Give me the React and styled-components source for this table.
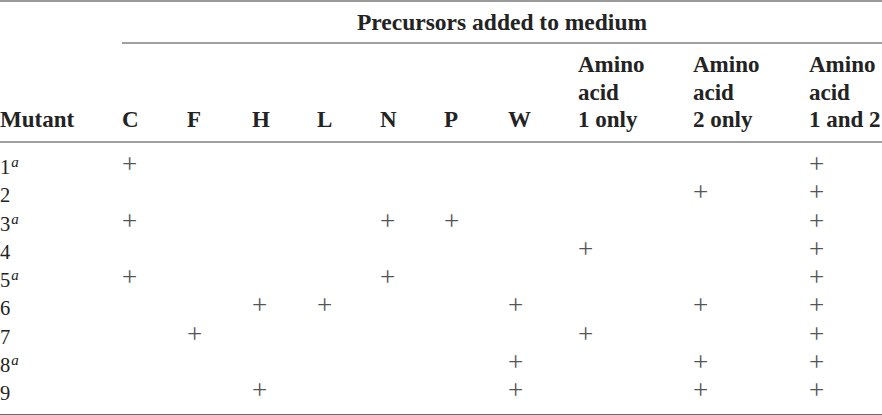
import React from 'react';
import styled, { createGlobalStyle } from 'styled-components';

const COLUMNS = [
    { key: 'mutant', label: ['Mutant'], width: 122 },
    { key: 'C', label: ['C'], width: 65 },
    { key: 'F', label: ['F'], width: 65 },
    { key: 'H', label: ['H'], width: 65 },
    { key: 'L', label: ['L'], width: 63 },
    { key: 'N', label: ['N'], width: 64 },
    { key: 'P', label: ['P'], width: 64 },
    { key: 'W', label: ['W'], width: 70 },
    { key: 'aa1', label: ['Amino', 'acid', '1 only'], width: 115 },
    { key: 'aa2', label: ['Amino', 'acid', '2 only'], width: 116 },
    { key: 'aa12', label: ['Amino', 'acid', '1 and 2'], width: 73 },
];

const MUTANTS = [
    { id: '1', note: true, plus: ['C', 'aa12'] },
    { id: '2', plus: ['aa2', 'aa12'] },
    { id: '3', note: true, plus: ['C', 'N', 'P', 'aa12'] },
    { id: '4', plus: ['aa1', 'aa12'] },
    { id: '5', note: true, plus: ['C', 'N', 'aa12'] },
    { id: '6', plus: ['H', 'L', 'W', 'aa2', 'aa12'] },
    { id: '7', plus: ['F', 'aa1', 'aa12'] },
    { id: '8', note: true, plus: ['W', 'aa2', 'aa12'] },
    { id: '9', plus: ['H', 'W', 'aa2', 'aa12'] },
];

const GlobalStyle = createGlobalStyle`
    html, body {
        margin: 0;
        padding: 0;
        background: #ffffff;
    }
    body {
        font-family: "Liberation Serif", "Times New Roman", serif;
        color: #232323;
    }
`;

const Table = styled.table`
    width: 882px;
    table-layout: fixed;
    border-collapse: collapse;
    border-top: 2px solid #9a9a9a;
    border-bottom: 2px solid #6a6a6a;
`;

const GroupCell = styled.th`
    padding: 7px 0 5px;
    font-size: 23.5px;
    line-height: 27.5px;
    font-weight: bold;
    text-align: center;
    border-bottom: ${({ $ruled }) => ($ruled ? '2px solid #a0a0a0' : 'none')};
`;

const HeadCell = styled.th`
    padding: 7.5px 0 7px;
    font-size: 23px;
    line-height: 27.5px;
    font-weight: bold;
    text-align: left;
    vertical-align: bottom;
    white-space: nowrap;
    border-bottom: 2px solid #a0a0a0;
`;

const Row = styled.tr`
    &:first-child td {
        padding-top: 10.5px;
    }
    &:last-child td {
        padding-bottom: 6.5px;
    }
`;

const Cell = styled.td`
    height: 28.3px;
    padding: 0;
    font-size: 20.5px;
    line-height: 28.3px;
    text-align: left;
    white-space: nowrap;
`;

const Note = styled.sup`
    font-style: italic;
    font-size: 15px;
    line-height: 0;
    vertical-align: 0.45em;
    margin-left: 1px;
`;

const Plus = styled.span`
    font-size: 27px;
    line-height: 0;
    color: #555555;
    vertical-align: 0.04em;
`;

export default function App() {
    return (
        <>
            <GlobalStyle />
            <Table>
                <colgroup>
                    {COLUMNS.map((col) => (
                        <col key={col.key} style={{ width: col.width }} />
                    ))}
                </colgroup>
                <thead>
                    <tr>
                        <GroupCell />
                        <GroupCell colSpan={COLUMNS.length - 1} $ruled>
                            Precursors added to medium
                        </GroupCell>
                    </tr>
                    <tr>
                        {COLUMNS.map((col) => (
                            <HeadCell key={col.key}>
                                {col.label.map((line, i) => (
                                    <React.Fragment key={i}>
                                        {i > 0 && <br />}
                                        {line}
                                    </React.Fragment>
                                ))}
                            </HeadCell>
                        ))}
                    </tr>
                </thead>
                <tbody>
                    {MUTANTS.map((m) => (
                        <Row key={m.id}>
                            <Cell>
                                {m.id}
                                {m.note && <Note>a</Note>}
                            </Cell>
                            {COLUMNS.slice(1).map((col) => (
                                <Cell key={col.key}>
                                    {m.plus.includes(col.key) && <Plus>+</Plus>}
                                </Cell>
                            ))}
                        </Row>
                    ))}
                </tbody>
            </Table>
        </>
    );
}
